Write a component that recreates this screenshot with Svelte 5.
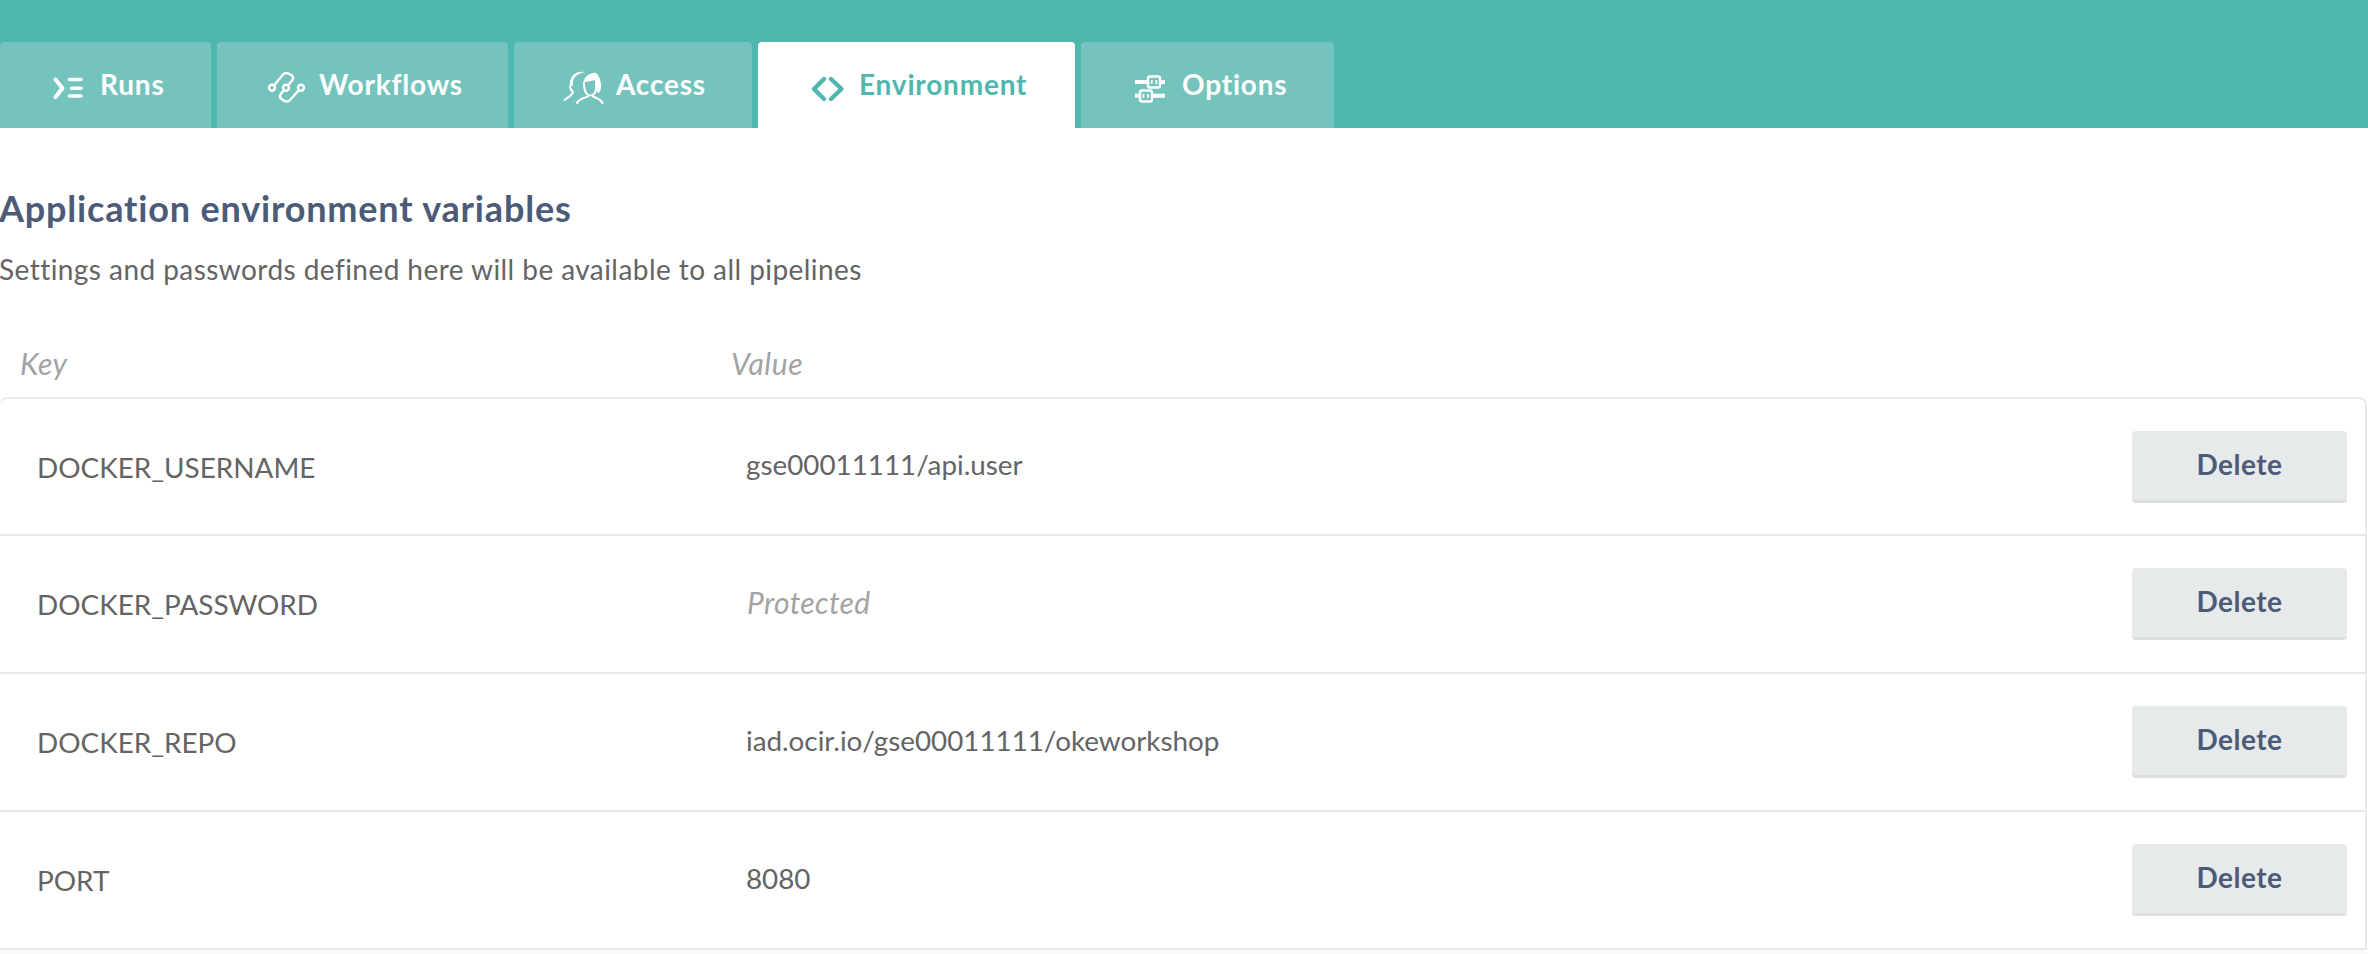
<script>
  const tabs = [
    { name: "Runs", icon: "runs" },
    { name: "Workflows", icon: "workflows" },
    { name: "Access", icon: "access" },
    { name: "Environment", icon: "environment", active: true },
    { name: "Options", icon: "options" },
  ];

  const rows = [
    { key: "DOCKER_USERNAME", value: "gse00011111/api.user" },
    { key: "DOCKER_PASSWORD", value: "Protected", secret: true },
    { key: "DOCKER_REPO", value: "iad.ocir.io/gse00011111/okeworkshop" },
    { key: "PORT", value: "8080" },
  ];
</script>

<div class="page">
  <nav class="tabbar">
    {#each tabs as tab}
      <div class="tab {tab.icon}" class:active={tab.active}>
        <svg class="icon" viewBox="0 0 60 50" width="60" height="50" aria-hidden="true">
          {#if tab.icon === "runs"}
            <path d="M15.500 19.500l7 8.800-7 8.800" fill="none" stroke="currentColor" stroke-width="4" stroke-linecap="round" stroke-linejoin="round" />
            <path d="M29.500 19.500H41M31.500 28.300H41M29.500 36H41" fill="none" stroke="currentColor" stroke-width="3.600" stroke-linecap="round" />
          {:else if tab.icon === "workflows"}
            <g fill="none" stroke="currentColor" stroke-width="2.400">
              <circle cx="11" cy="27.700" r="3" /><circle cx="25" cy="27.700" r="3" /><circle cx="40" cy="27.700" r="3" />
              <path d="M13 25.500L22 14.500Q24.500 12 27.500 13.500L31 15.500Q33 17.500 31.500 20L27 25.500M38 30L29 40Q26.500 42.500 23.500 41L20.500 39Q18 37 19.500 34.500L23 30" />
            </g>
          {:else if tab.icon === "access"}
            <g fill="none" stroke="currentColor" stroke-width="2" stroke-linecap="round">
              <path d="M14 26Q15 31 17 32Q16.500 35 8.500 40" />
              <path d="M28 23Q28 31 31 34Q34.500 37 38 34Q41 31 40 22" />
              <path d="M21 43Q23 39 32 36.500M46.500 43Q44 39 37 36.500" />
            </g>
            <path d="M13.500 26Q14 15 21 12.500Q25 11.500 29 12Q23 13 19 17Q16 21 17 26Z" fill="currentColor" />
            <path d="M27 24Q28 17 33 14.500Q37 12 40 13Q44 16 45 24Q45.500 30 43 33Q41 33.500 41 31Q42 25 38.500 20Q33 22 28.500 22Z" fill="currentColor" />
          {:else if tab.icon === "environment"}
            <path d="M24 19L14 29l10 10M31 19l10.500 10-10.500 10" fill="none" stroke="currentColor" stroke-width="4.400" stroke-linecap="round" stroke-linejoin="round" />
          {:else}
            <path d="M11 22H41M11 35.700H41" fill="none" stroke="currentColor" stroke-width="4" />
            <rect x="24" y="16.500" width="12" height="11" rx="2" fill="#74c4bd" stroke="currentColor" stroke-width="2.400" />
            <rect x="16" y="30.500" width="12" height="11" rx="2" fill="#74c4bd" stroke="currentColor" stroke-width="2.400" />
            <path d="M27.700 20v4M32.300 20v4M19.500 34v4M24 34v4" fill="none" stroke="currentColor" stroke-width="1.800" />
          {/if}
        </svg>
        <span>{tab.name}</span>
      </div>
    {/each}
  </nav>

  <main>
    <h1>Application environment variables</h1>
    <p class="intro">Settings and passwords defined here will be available to all pipelines</p>

    <div class="columns">
      <span>Key</span>
      <span>Value</span>
    </div>

    <div class="table">
      {#each rows as row}
        <div class="row">
          <span class="key">{row.key}</span>
          <span class="value" class:secret={row.secret}>{row.value}</span>
          <button>Delete</button>
        </div>
      {/each}
    </div>
  </main>
</div>

<style>
  :global(body) {
    margin: 0;
    background: #fff;
  }

  .page {
    height: 954px;
    overflow: hidden;
    background: #f9fafa;
    font-family: Lato, "Open Sans", sans-serif;
    color: #646464;
  }

  .tabbar {
    display: flex;
    gap: 6px;
    height: 86px;
    padding-top: 42px;
    background: #50b7af;
  }

  .tab {
    display: flex;
    align-items: center;
    box-sizing: border-box;
    border-radius: 4px 4px 0 0;
    background: #74c4bd;
    color: #fff;
    font-size: 28px;
    font-weight: 700;
    letter-spacing: 0.8px;
  }

  .tab span {
    position: relative;
    top: -1px;
  }

  .tab.runs { width: 211px; padding-left: 40px; }
  .tab.workflows { width: 291px; padding-left: 44px; }
  .tab.workflows span { margin-left: -2px; }
  .tab.access { width: 238px; padding-left: 42px; }
  .tab.environment { width: 317px; padding-left: 42px; }
  .tab.environment span { margin-left: -1px; }
  .tab.options { width: 253px; padding-left: 43px; }
  .tab.options span { margin-left: -2px; }

  .tab.active {
    background: #fff;
    color: #50b7af;
  }

  main {
    display: flex;
    flex-direction: column;
    background: #fff;
  }

  h1 {
    margin: 60px 0 0 -1px;
    color: #4b5b78;
    font-size: 36px;
    line-height: 40px;
    font-weight: 700;
    letter-spacing: 0.82px;
  }

  .intro {
    margin: 24px 0 0 -1px;
    font-size: 28px;
    line-height: 34px;
    letter-spacing: 0.44px;
  }

  .columns {
    display: grid;
    grid-template-columns: 711px 1fr;
    margin-top: 60px;
    padding-left: 20px;
    color: #a3a3a3;
    font-size: 30px;
    line-height: 34px;
    font-style: italic;
    letter-spacing: 0.6px;
  }

  .table {
    box-sizing: border-box;
    width: 2367px;
    margin-top: 17px;
    border: 2px solid #e6eaea;
    border-left: 0;
    border-bottom: 0;
    border-radius: 8px 8px 0 0;
  }

  .row {
    display: grid;
    grid-template-columns: 709px 1fr 215px;
    align-items: center;
    box-sizing: border-box;
    height: 138px;
    padding: 0 18px 0 37px;
    border-bottom: 2px solid #e6eaea;
    font-size: 27.8px;
  }

  .row:first-child {
    height: 137px;
  }

  .key {
    font-size: 27.9px;
  }

  .value {
    position: relative;
    top: -2px;
  }

  .value.secret {
    padding-left: 1px;
    color: #a3a3a3;
    font-size: 30px;
    font-style: italic;
    letter-spacing: 0.35px;
  }

  button {
    height: 72px;
    padding: 0 0 3px;
    border: 0;
    border-bottom: 3px solid #dcdfe0;
    border-radius: 4px;
    background: #e7eaeb;
    color: #4b5b78;
    font: 700 28px Lato, "Open Sans", sans-serif;
    letter-spacing: 0.5px;
  }
</style>
